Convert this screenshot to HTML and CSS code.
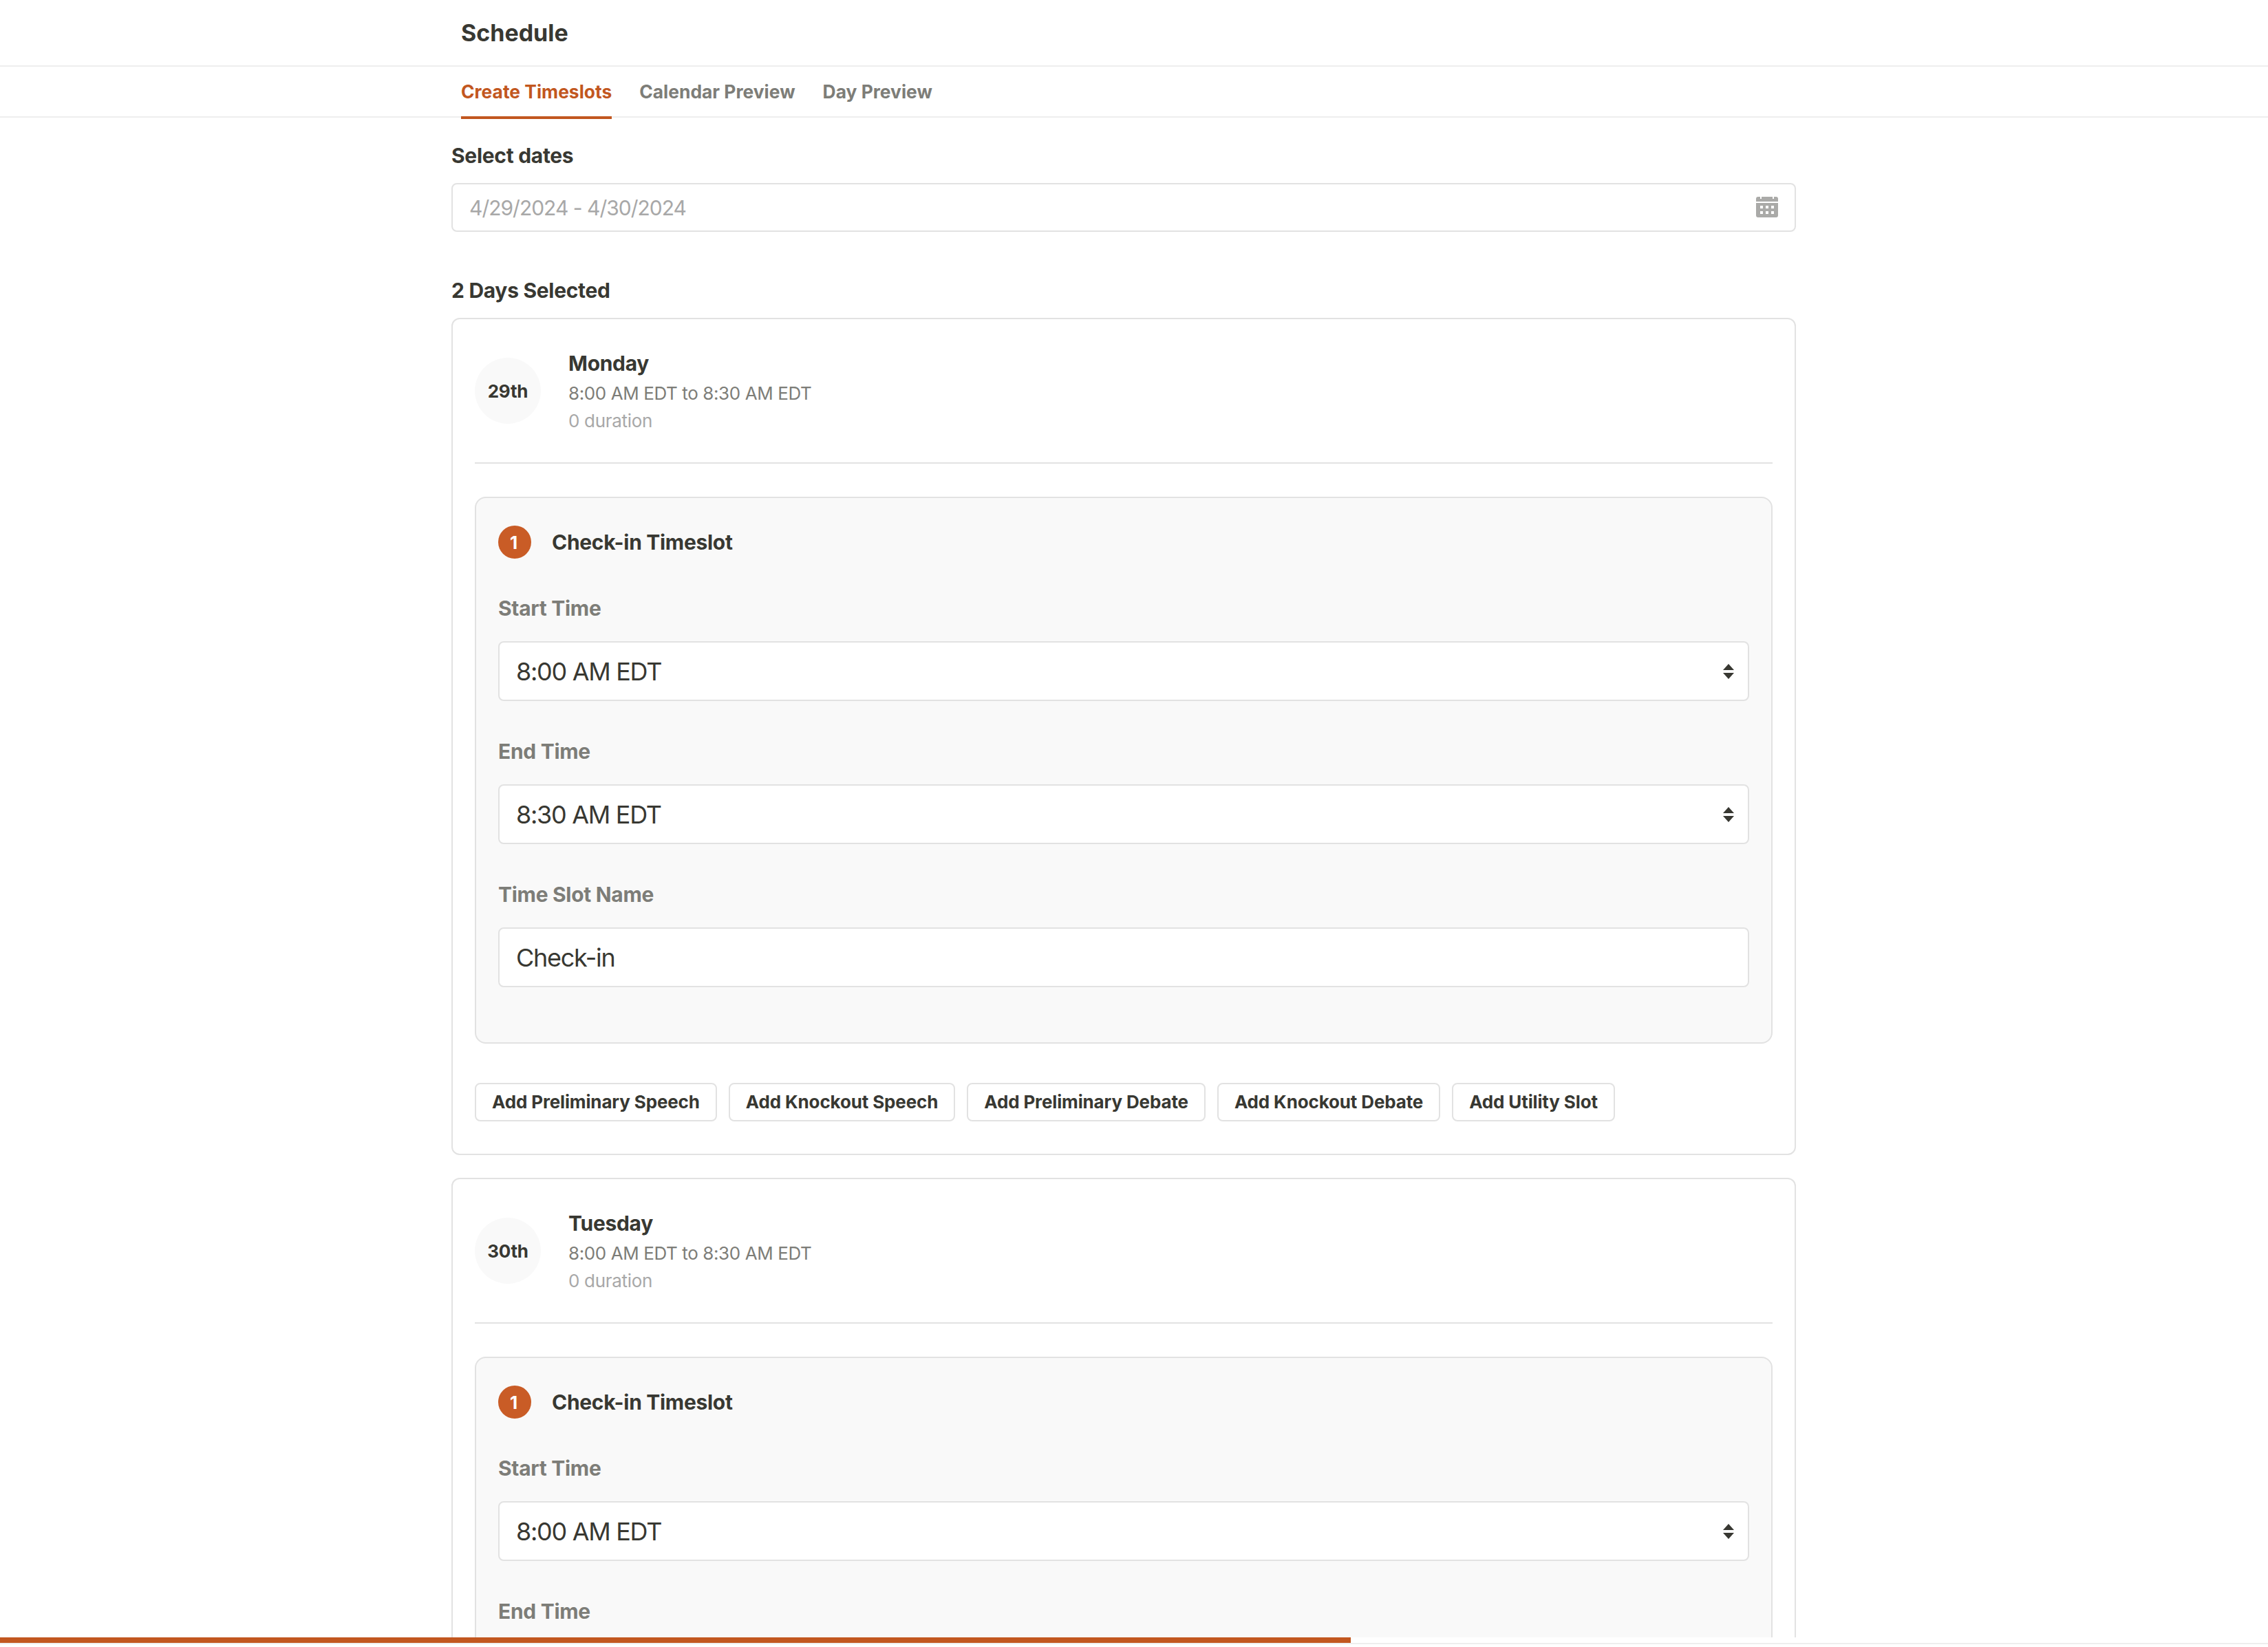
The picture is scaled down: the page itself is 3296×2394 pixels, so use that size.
FILE: index.html
```html
<!DOCTYPE html>
<html lang="en">

<head>
  <meta charset="UTF-8" />
  <title>Schedule</title>
  <link rel="stylesheet" href="styles.css">
</head>

<body>
  <header class="topbar">
    <h1>Schedule</h1>
  </header>
  <nav class="tabs">
    <a class="tab active">Create Timeslots</a>
    <a class="tab">Calendar Preview</a>
    <a class="tab">Day Preview</a>
  </nav>

  <main class="page">
    <div class="content">
      <h2 class="dates-title">Select dates</h2>
      <div class="date-input">
        <span>4/29/2024 - 4/30/2024</span>
        <svg class="cal-icon" viewBox="0 0 32 30" width="32" height="30">
          <path fill="#aaaaa8" d="M3 0h3v3h2V0h16v3h2V0h3a3 3 0 0 1 3 3v4H0V3a3 3 0 0 1 3-3z" />
          <path fill="#aaaaa8" fill-rule="evenodd" d="M0 9h32v18a3 3 0 0 1-3 3H3a3 3 0 0 1-3-3z
            M6 13v4h4v-4z M14 13v4h4v-4z M22 13v4h4v-4z M6 21v4h4v-4z M14 21v4h4v-4z M22 21v4h4v-4z" />
        </svg>
      </div>

      <h2 class="days-title">2 Days Selected</h2>

      <section class="day-card">
        <div class="day-head">
          <div class="day-num">29th</div>
          <div>
            <div class="day-name">Monday</div>
            <div class="day-time">8:00 AM EDT to 8:30 AM EDT</div>
            <div class="day-dur">0 duration</div>
          </div>
        </div>
        <div class="slot">
          <div class="slot-head"><span class="badge">1</span><span class="slot-title">Check-in Timeslot</span></div>
          <div class="field-label">Start Time</div>
          <div class="field"><span>8:00 AM EDT</span>
            <svg class="updown" viewBox="0 0 16 22" width="16" height="22">
              <path fill="#383832" d="M8 0l8 9H0z M0 13h16l-8 9z" />
            </svg>
          </div>
          <div class="field-label">End Time</div>
          <div class="field"><span>8:30 AM EDT</span>
            <svg class="updown" viewBox="0 0 16 22" width="16" height="22">
              <path fill="#383832" d="M8 0l8 9H0z M0 13h16l-8 9z" />
            </svg>
          </div>
          <div class="field-label">Time Slot Name</div>
          <div class="field"><span>Check-in</span></div>
        </div>
        <div class="actions">
          <button class="btn">Add Preliminary Speech</button>
          <button class="btn">Add Knockout Speech</button>
          <button class="btn">Add Preliminary Debate</button>
          <button class="btn">Add Knockout Debate</button>
          <button class="btn">Add Utility Slot</button>
        </div>
      </section>

      <section class="day-card">
        <div class="day-head">
          <div class="day-num">30th</div>
          <div>
            <div class="day-name">Tuesday</div>
            <div class="day-time">8:00 AM EDT to 8:30 AM EDT</div>
            <div class="day-dur">0 duration</div>
          </div>
        </div>
        <div class="slot">
          <div class="slot-head"><span class="badge">1</span><span class="slot-title">Check-in Timeslot</span></div>
          <div class="field-label">Start Time</div>
          <div class="field"><span>8:00 AM EDT</span>
            <svg class="updown" viewBox="0 0 16 22" width="16" height="22">
              <path fill="#383832" d="M8 0l8 9H0z M0 13h16l-8 9z" />
            </svg>
          </div>
          <div class="field-label">End Time</div>
        </div>
      </section>
    </div>
  </main>

  <footer class="progress">
    <div class="progress-bar" style="width: 1963px"></div>
  </footer>
</body>

</html>
```

FILE: styles.css
```css
html,
body {
  height: 100%;
}

body {
  margin: 0;
  display: flex;
  flex-direction: column;
  overflow: hidden;
  background: #fff;
  color: #383832;
  font-family: Inter, "Liberation Sans", sans-serif;
}

h1,
h2 {
  margin: 0;
  font-weight: 700;
}

.topbar {
  flex: none;
  height: 95px;
  padding-left: 670px;
  display: flex;
  align-items: center;
  border-bottom: 2px solid #eeeeee;
}

.topbar h1 {
  font-size: 34px;
}

.tabs {
  flex: none;
  height: 72px;
  padding-left: 670px;
  display: flex;
  gap: 40px;
  border-bottom: 2px solid #eeeeee;
}

.tab {
  height: 72px;
  line-height: 73px;
  font-size: 26.4px;
  font-weight: 700;
  color: #7d7d78;
}

.tab.active {
  color: #c2571f;
  border-bottom: 4px solid #c2571f;
}

.page {
  flex: 1;
  min-height: 0;
  overflow: hidden;
}

.content {
  width: 1954px;
  margin-left: 656px;
  padding-top: 35px;
}

.dates-title,
.days-title {
  font-size: 30px;
  line-height: 40px;
  letter-spacing: -0.3px;
}

.date-input {
  height: 71px;
  box-sizing: border-box;
  margin-top: 20px;
  padding: 0 24px;
  display: flex;
  align-items: center;
  justify-content: space-between;
  border: 2px solid #e2e2e2;
  border-radius: 8px;
  font-size: 30px;
  letter-spacing: -1px;
  color: #a8a8a8;
}

.cal-icon {
  margin-bottom: 1px;
}

.days-title {
  margin-top: 65px;
  margin-bottom: 20px;
}

.day-card {
  box-sizing: border-box;
  margin-bottom: 33px;
  padding: 44px 32px 47px;
  border: 2px solid #e2e2e2;
  border-radius: 12px;
}

.day-head {
  display: flex;
  align-items: flex-start;
  gap: 40px;
  padding-bottom: 40px;
  border-bottom: 2px solid #e2e2e2;
}

.day-num {
  width: 96px;
  height: 96px;
  flex: none;
  margin-top: 12px;
  display: flex;
  align-items: center;
  justify-content: center;
  border-radius: 50%;
  background: #f9f9f9;
  font-size: 26px;
  font-weight: 700;
  letter-spacing: -0.2px;
}

.day-name {
  font-size: 30px;
  font-weight: 700;
  line-height: 40px;
  letter-spacing: -0.3px;
}

.day-time {
  margin-top: 4px;
  font-size: 26px;
  line-height: 40px;
  letter-spacing: -0.4px;
  color: #7d7d78;
}

.day-dur {
  font-size: 26px;
  line-height: 40px;
  letter-spacing: -0.3px;
  color: #a8a8a8;
}

.slot {
  margin-top: 48px;
  padding: 40px 32px 27px;
  background: #f9f9f9;
  border: 2px solid #e2e2e2;
  border-radius: 16px;
}

.slot-head {
  display: flex;
  align-items: center;
  gap: 30px;
  margin-bottom: 52px;
}

.badge {
  width: 48px;
  height: 48px;
  flex: none;
  padding-right: 3px;
  box-sizing: border-box;
  display: flex;
  align-items: center;
  justify-content: center;
  border-radius: 50%;
  background: #c95c26;
  color: #fff;
  font-size: 26px;
  font-weight: 700;
}

.slot-title {
  font-size: 30px;
  font-weight: 700;
  letter-spacing: -0.3px;
}

.field-label {
  font-size: 30px;
  font-weight: 700;
  line-height: 40px;
  letter-spacing: -0.3px;
  margin-bottom: 28px;
  color: #7d7d78;
}

.field {
  height: 87px;
  box-sizing: border-box;
  margin-bottom: 53px;
  padding: 0 20px 0 24px;
  display: flex;
  align-items: center;
  justify-content: space-between;
  background: #fff;
  border: 2px solid #e2e2e2;
  border-radius: 8px;
  font-size: 36px;
  letter-spacing: -1.3px;
}

.actions {
  display: flex;
  gap: 17px;
  margin-top: 57px;
}

.btn {
  height: 56px;
  padding: 0 23px 2px;
  background: #fff;
  border: 2px solid #e2e2e2;
  border-radius: 8px;
  color: #383832;
  font-family: inherit;
  font-size: 26px;
  font-weight: 700;
  letter-spacing: -0.14px;
}

.progress {
  flex: none;
  height: 14px;
  background: #fff;
}

.progress-bar {
  height: 8px;
  background: #c2571f;
}

.progress::after {
  content: "";
  display: block;
  height: 2px;
  background: #eeeeee;
}
```
